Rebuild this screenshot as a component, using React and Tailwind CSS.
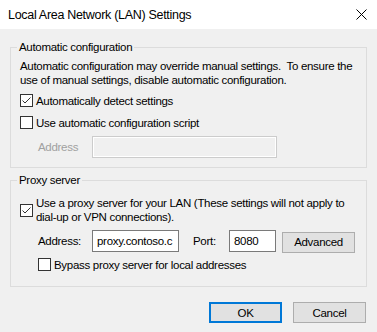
import React from 'react';

function CheckBox({ checked }) {
  return (
    <div className="w-[13px] h-[13px] shrink-0 border border-[#333333] bg-white flex items-center justify-center">
      {checked && (
        <svg width="11" height="11" viewBox="0 0 11 11">
          <path d="M1.5 5.5 L4 8 L9.5 2.5" fill="none" stroke="#333333" strokeWidth="1" />
        </svg>
      )}
    </div>
  );
}

function WinButton({ children, primary, className = '' }) {
  return (
    <div
      className={`h-[21px] w-[73px] bg-[#e1e1e1] flex items-center justify-center ${
        primary ? 'border-2 border-[#0078d7]' : 'border border-[#adadad]'
      } ${className}`}
    >
      {children}
    </div>
  );
}

export default function App() {
  return (
    <div className="w-[377px] h-[332px] bg-[#f0f0f0] text-[11.5px] tracking-[-0.3px] leading-[14px] text-black font-['Liberation_Sans',Arial,sans-serif] overflow-hidden">
      {/* title bar */}
      <div className="h-[29px] bg-white flex items-center justify-between pl-[8px] pr-[10px]">
        <span className="text-[12.5px] tracking-[-0.3px]">Local Area Network (LAN) Settings</span>
        <svg width="11" height="11" viewBox="0 0 11 11">
          <path d="M0.5 0.5 L10.5 10.5 M10.5 0.5 L0.5 10.5" stroke="#000" strokeWidth="1" />
        </svg>
      </div>

      {/* automatic configuration */}
      <fieldset className="mx-[10px] mt-[10px] border border-[#dcdcdc] pl-[9px] pr-[8px] pb-[9px]">
        <legend className="-ml-[3px] px-[2px] leading-[16px]">Automatic configuration</legend>
        <p className="mt-[4px]">
          Automatic configuration may override manual settings.&nbsp; To ensure the use of manual settings, disable automatic configuration.
        </p>
        <div className="mt-[7px] flex items-center gap-[3px] h-[13px]">
          <CheckBox checked />
          <span>Automatically detect settings</span>
        </div>
        <div className="mt-[9px] flex items-center gap-[3px] h-[13px]">
          <CheckBox />
          <span>Use automatic configuration script</span>
        </div>
        <div className="mt-[7px] flex items-center h-[22px]">
          <span className="ml-[18px] w-[54px] text-[#a0a0a0]">Address</span>
          <div className="w-[185px] h-[22px] border border-[#cccccc] shadow-[inset_0_0_0_1px_#ffffff]" />
        </div>
      </fieldset>

      {/* proxy server */}
      <fieldset className="mx-[10px] mt-[4px] border border-[#dcdcdc] pl-[9px] pr-[8px] pb-[15px]">
        <legend className="-ml-[3px] px-[2px] leading-[16px]">Proxy server</legend>
        <div className="mt-[8px] flex items-center gap-[3px]">
          <CheckBox checked />
          <span>Use a proxy server for your LAN (These settings will not apply to dial-up or VPN connections).</span>
        </div>
        <div className="mt-[6px] flex items-center h-[22px]">
          <span className="ml-[18px] w-[54px]">Address:</span>
          <div className="w-[87px] h-[22px] border border-[#7a7a7a] bg-white pl-[4px] flex items-center overflow-hidden whitespace-nowrap">
            proxy.contoso.c
          </div>
          <span className="ml-[14px] w-[36px]">Port:</span>
          <div className="w-[47px] h-[22px] border border-[#7a7a7a] bg-white pl-[4px] flex items-center">8080</div>
          <WinButton className="ml-[6px] mt-[2px]">Advanced</WinButton>
        </div>
        <div className="mt-[6px] ml-[18px] flex items-center gap-[3px] h-[13px]">
          <CheckBox />
          <span>Bypass proxy server for local addresses</span>
        </div>
      </fieldset>

      {/* buttons */}
      <div className="mt-[15px] mr-[11px] flex justify-end gap-[11px]">
        <WinButton primary>OK</WinButton>
        <WinButton>Cancel</WinButton>
      </div>
    </div>
  );
}
